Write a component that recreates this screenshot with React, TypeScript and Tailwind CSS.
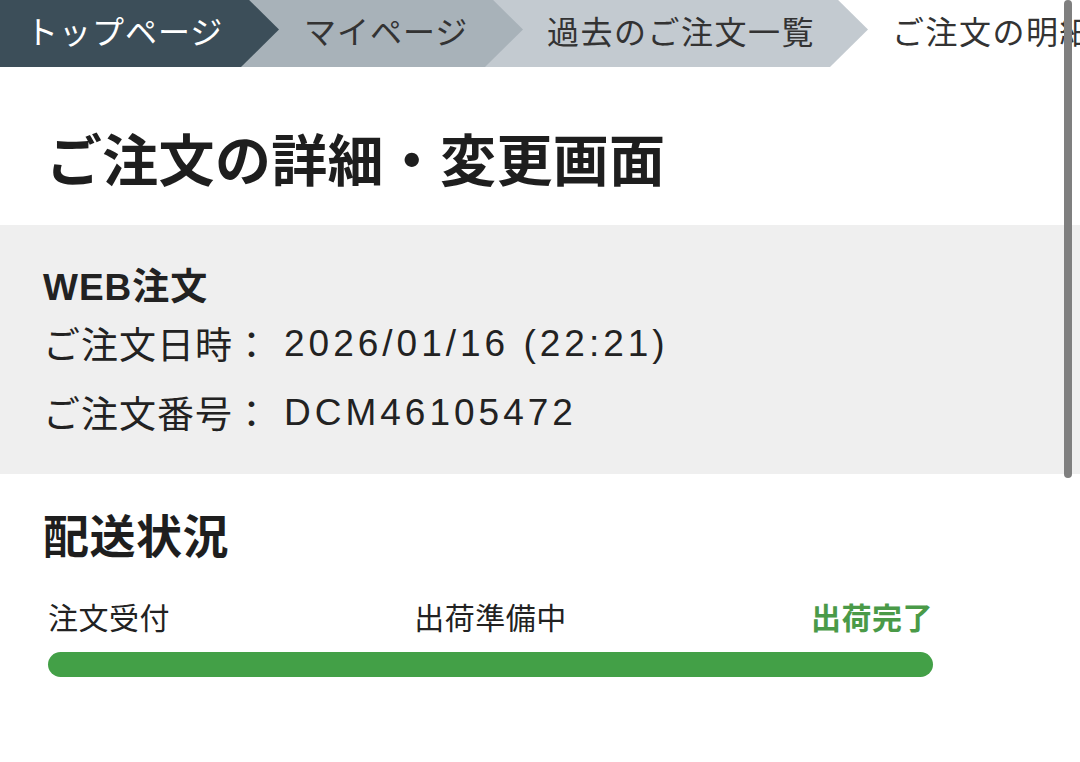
import React from "react";

const jp = "font-['Noto_Sans_CJK_JP','Noto_Sans',sans-serif]";
const latin = "font-['Liberation_Sans','Noto_Sans_CJK_JP',sans-serif]";

export default function App() {
  return (
    <div className={`relative w-[1080px] h-[762px] overflow-hidden bg-white text-[#222] ${jp}`}>
      {/* Breadcrumb */}
      <div className="flex h-[75px] -mt-[8px] overflow-hidden whitespace-nowrap">
        <div className="relative z-30 flex items-center w-[279px] shrink-0 pl-[26px] bg-[#3c4e59] text-white text-[32px] tracking-[1px] [clip-path:polygon(0_0,calc(100%_-_38px)_0,100%_50%,calc(100%_-_38px)_100%,0_100%)]">
          トップページ
        </div>
        <div className="relative z-20 -ml-[38px] flex items-center w-[282px] shrink-0 pl-[63px] bg-[#a8b2b9] text-[#333] text-[32px] tracking-[1px] [clip-path:polygon(0_0,calc(100%_-_38px)_0,100%_50%,calc(100%_-_38px)_100%,0_100%)]">
          マイページ
        </div>
        <div className="relative z-10 -ml-[38px] flex items-center w-[383px] shrink-0 pl-[62px] bg-[#c3cad0] text-[#333] text-[32px] tracking-[1.5px] [clip-path:polygon(0_0,calc(100%_-_38px)_0,100%_50%,calc(100%_-_38px)_100%,0_100%)]">
          過去のご注文一覧
        </div>
        <div className="-ml-[38px] flex items-center shrink-0 pl-[62px] text-[#333] text-[32px] tracking-[1.5px]">
          ご注文の明細
        </div>
      </div>

      {/* Title */}
      <div className="pt-[62px] pb-[40px] pl-[46px]">
        <h1 className="text-[56px] leading-[56px] font-bold tracking-[0.3px] text-[#1e1e1e]">
          ご注文の詳細・変更画面
        </h1>
      </div>

      {/* Order info */}
      <div className="bg-[#efefef] pt-[37px] pb-[26px] pl-[43px]">
        <div className={`text-[37px] leading-[44px] font-bold tracking-[1px] ${latin}`}>
          WEB<span className={jp}>注文</span>
        </div>
        <div className="flex items-center h-[68px]">
          <span className="text-[37px] tracking-[1px]">ご注文日時：</span>
          <span className={`ml-[13px] text-[37px] tracking-[4px] ${latin}`}>2026/01/16 (22:21)</span>
        </div>
        <div className="flex items-center h-[70px]">
          <span className="text-[37px] tracking-[1px]">ご注文番号：</span>
          <span className={`ml-[13px] text-[37px] tracking-[4px] ${latin}`}>DCM46105472</span>
        </div>
      </div>

      {/* Delivery status */}
      <div className="pt-[36px] pl-[43px]">
        <h2 className="text-[46px] leading-[46px] font-bold tracking-[0.5px] text-[#1e1e1e]">配送状況</h2>
      </div>
      <div className="ml-[48px] w-[885px] mt-[45px]">
        <div className="flex justify-between items-center h-[30px] text-[30px] leading-[30px]">
          <span className="tracking-[0.5px]">注文受付</span>
          <span className="tracking-[0.5px]">出荷準備中</span>
          <span className="font-bold text-[#4a9a48] tracking-[0.5px]">出荷完了</span>
        </div>
        <div className="mt-[21px] h-[25px] rounded-full bg-[#43a047]" />
      </div>

      {/* Overlay scrollbar indicator */}
      <div className="absolute left-[1064px] top-0 w-[8px] h-[478px] rounded-full bg-[#7f7f7f]" />
    </div>
  );
}
